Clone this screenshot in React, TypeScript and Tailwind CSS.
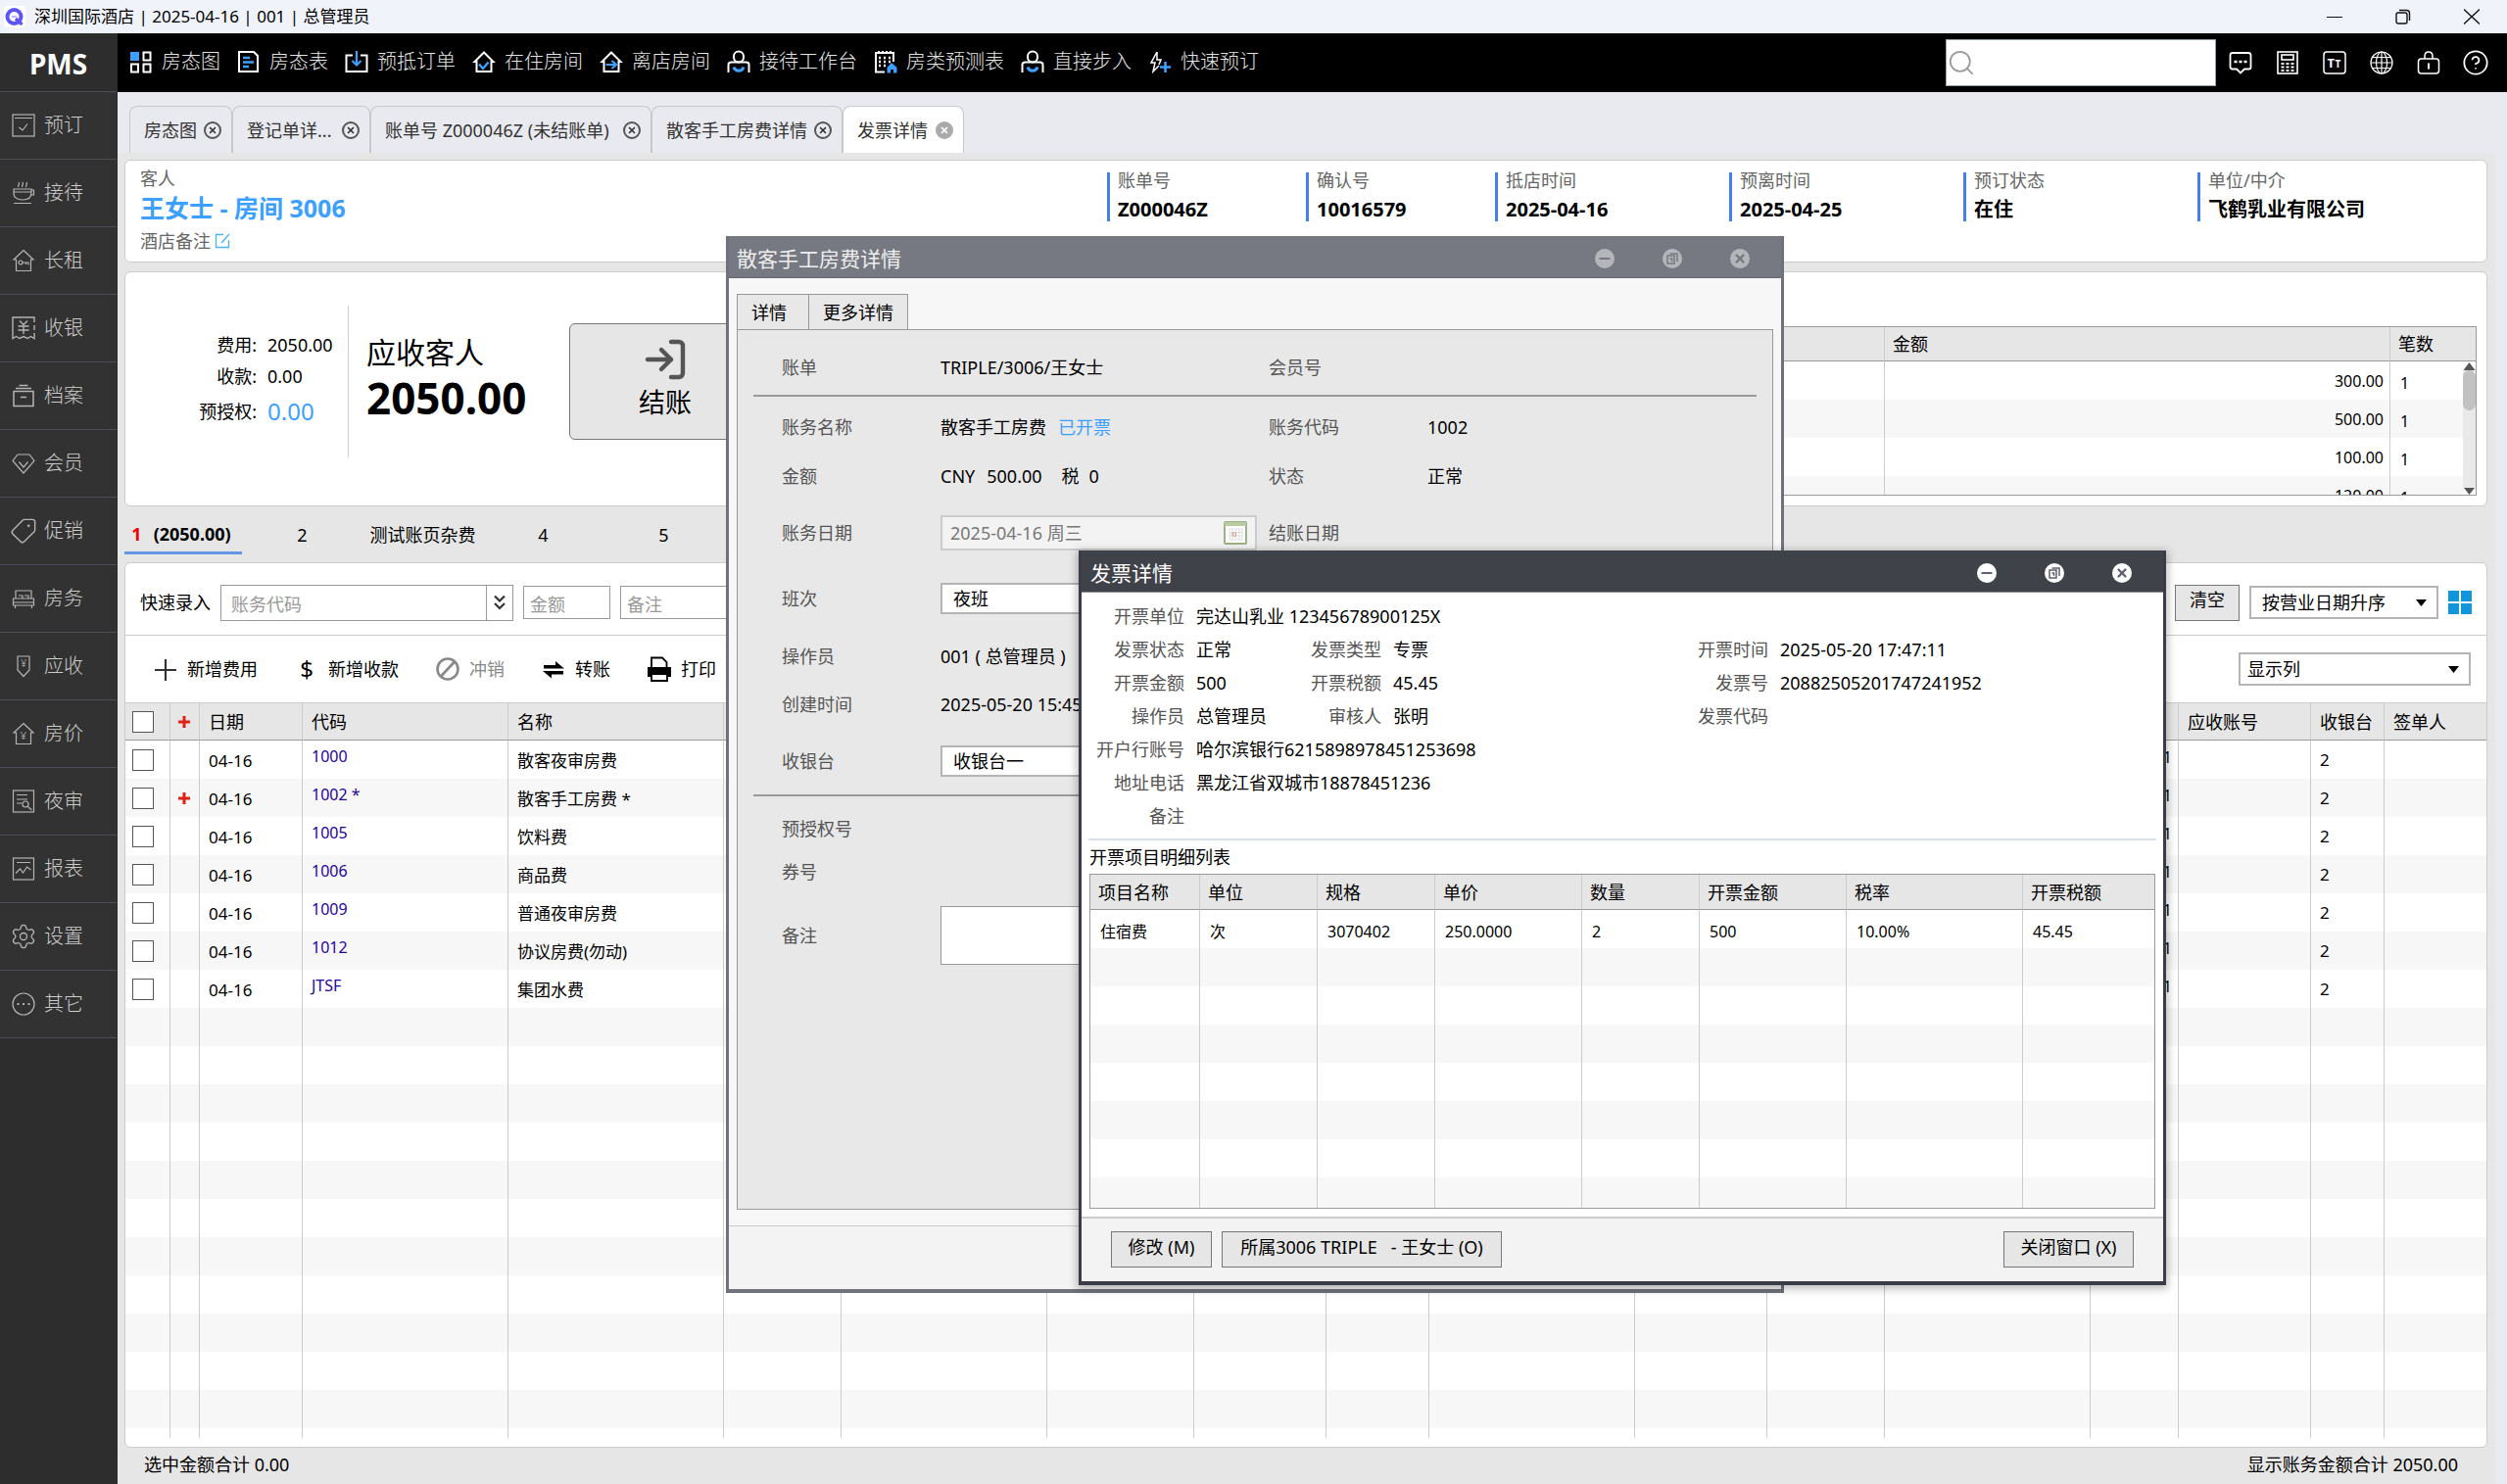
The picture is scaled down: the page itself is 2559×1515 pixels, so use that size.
import type { ReactNode } from 'react';
import { CircleHelp, LogIn, Minus, Search, Settings, Tag, X } from 'lucide-react';

/* ---------- icons ---------- */

function Glyph({ size = 24, stroke = '#b4b4b4', width = 1.2, children }: {
  size?: number;
  stroke?: string;
  width?: number;
  children: ReactNode;
}) {
  return (
    <svg
      width={size}
      height={size}
      viewBox="0 0 24 24"
      fill="none"
      stroke={stroke}
      strokeWidth={width}
      aria-hidden="true"
      className="shrink-0"
    >
      {children}
    </svg>
  );
}

function Yen({ x = 12, y = 16, size = 11 }: { x?: number; y?: number; size?: number }) {
  return (
    <text x={x} y={y} fontSize={size} textAnchor="middle" fill="#c4c4c4" stroke="none">
      ¥
    </text>
  );
}

const HOUSE = 'M12 1.5 L22 11 H19.5 V22.5 H4.5 V11 H2 Z';
const BLUE = '#3ba0ff';

const sideItems: { label: string; icon: ReactNode }[] = [
  { label: '预订', icon: <Glyph><rect x="1" y="1" width="22" height="22" /><path d="M3 4.5h18M7.5 14l3.5 3 5-6.500" /></Glyph> },
  { label: '接待', icon: <Glyph><path d="M2 8h18v4c0 5-4 7-9 7s-9-2-9-7zM2 11h18M20 9h2.500v5H19M2 22.500h18M7 6c-2-2 2-2 0-5M11 6c-2-2 2-2 0-5M15 6c-2-2 2-2 0-5" /></Glyph> },
  { label: '长租', icon: <Glyph><path d={HOUSE} /><circle cx="9" cy="14" r="2" /><path d="M11 14h6v2.500M14.500 14v2" /></Glyph> },
  { label: '收银', icon: <Glyph width={1.4}><path d="M23 6V1H1v21.500l3.500-2 3.500 2 4-2 4 2 3.500-2 3.500 2V17M23 9v5" /><path d="M8 4.500l4 4 4-4M12 8.500V18M6.500 10h11M6.500 14h11" /></Glyph> },
  { label: '档案', icon: <Glyph width={1.5}><rect x="2" y="7.500" width="20" height="15" /><path d="M4 4.500h16M7.500 1.500h9M9 13.500h6" /></Glyph> },
  { label: '会员', icon: <Glyph><path d="M6 3h12l5 6.500L12 22 1 9.500zM7.500 10.500L12 16l4.500-5.500" /></Glyph> },
  { label: '促销', icon: <Tag className="-mx-0.5 h-7 w-7 shrink-0 rotate-90 text-[#b4b4b4]" strokeWidth={1.2} aria-hidden="true" /> },
  { label: '房务', icon: <Glyph><path d="M4 12V4h16v8M1.500 12h21v4h-21zM1.500 16h21v3h-21zM3.500 19v3M20.500 19v3M7 9h4v3M13 9h4v3" /></Glyph> },
  { label: '应收', icon: <Glyph><path d="M6 2h12v14l-6 6.500L6 16z" /><Yen y={13} size={10} /></Glyph> },
  { label: '房价', icon: <Glyph><path d={HOUSE} /><Yen y={18} /></Glyph> },
  { label: '夜审', icon: <Glyph><rect x="1.500" y="1" width="21" height="22" /><path d="M5 5.500h11M5 10h11M5 14h5" /><circle cx="14" cy="15" r="3" /><path d="M16.500 17.500l4 3.500" /></Glyph> },
  { label: '报表', icon: <Glyph><rect x="1.500" y="1" width="21" height="22" /><path d="M5 5.500h14M4 16.500l4.500-4.500 3 4 4-6 4 3" /></Glyph> },
  { label: '设置', icon: <Settings className="-mx-0.5 h-7 w-7 shrink-0 text-[#b4b4b4]" strokeWidth={1.1} aria-hidden="true" /> },
  { label: '其它', icon: <Glyph><circle cx="12" cy="12" r="11" /><path d="M5.500 12h2M11 12h2M16.500 12h2" strokeWidth={2} /></Glyph> },
];

const houseNav = (
  <path d="M12 2.500L21.500 12H19.500v10H4.500V12H2.500z" />
);

const personNav = (
  <>
    <rect x="7" y="1.500" width="10" height="11" rx="5" />
    <path d="M1.500 23V15c0-2 1-2.500 3-2.500h15c2 0 3 .5 3 2.500v8" />
    <path d="M7 17.500c1.500 5 8.500 5 10 0" stroke={BLUE} strokeWidth={3} />
  </>
);

const navItems: { label: string; icon: ReactNode }[] = [
  {
    label: '房态图',
    icon: (
      <>
        <rect x="1" y="2" width="9" height="9" fill={BLUE} stroke="none" />
        <rect x="14.500" y="2.500" width="7" height="8" />
        <rect x="2" y="14.500" width="7" height="8" />
        <rect x="14.500" y="14.500" width="7" height="8" />
      </>
    ),
  },
  {
    label: '房态表',
    icon: (
      <>
        <path d="M2 2h15l4 4v16H2z" />
        <path d="M6 8h7M6 12.500h11M6 17h6" stroke={BLUE} strokeWidth={2.5} />
      </>
    ),
  },
  {
    label: '预抵订单',
    icon: (
      <>
        <path d="M8 5.500H1.500V22h21V5.500H16" />
        <path d="M12 1v13M7.500 11l4.500 4.500 4.500-4.500" stroke={BLUE} strokeWidth={2.2} />
      </>
    ),
  },
  { label: '在住房间', icon: <>{houseNav}<path d="M7 14.500l4 4.500 5.500-6.500" stroke={BLUE} strokeWidth={2.4} /></> },
  { label: '离店房间', icon: <>{houseNav}<path d="M6.500 15h10M12.500 11l4.500 4-4.500 4" stroke={BLUE} strokeWidth={2.2} /></> },
  { label: '接待工作台', icon: personNav },
  {
    label: '房类预测表',
    icon: (
      <>
        <path d="M11 22.500H2V3h18v9M5 1v3M9 1v3M13 1v3M17 1v3" />
        <path d="M5 8h2M10 8h2M15 8h2M5 12h2M10 12h2M15 12h2M5 16h2M10 16h2" strokeWidth={2.4} />
        <path d="M18 13l5.500 5v5.500h-3.500V20h-3v3.500h-3.500V18z" fill={BLUE} stroke="none" />
      </>
    ),
  },
  { label: '直接步入', icon: personNav },
  {
    label: '快速预订',
    icon: (
      <>
        <path d="M9 2L3 13h4l-2 9 6-6M9 2v8h4l-2 5" strokeWidth={1.5} />
        <path d="M12 17.500h11M17.500 12v11" stroke={BLUE} strokeWidth={2.6} />
      </>
    ),
  },
];

const topTools: { label: string; icon: ReactNode }[] = [
  { label: '消息', icon: <Glyph stroke="#fff" width={1.8}><path d="M4 2h16a2.500 2.500 0 0 1 2.500 2.500v12a2 2 0 0 1-2 2H16L12 22.500 8 18.500H3.500a2 2 0 0 1-2-2v-12A2.500 2.500 0 0 1 4 2z" /><path d="M5.500 11h3M10.500 11h3M15.500 11h3" strokeWidth={2.4} /></Glyph> },
  { label: '计算器', icon: <Glyph stroke="#fff" width={1.6}><rect x="2" y="1" width="20" height="22" /><rect x="6" y="4" width="12" height="5" /><path d="M5.500 13h3M10.500 13h3M15.500 13h3M5.500 16.500h3M10.500 16.500h3M15.500 16.500h3M5.500 20h3M10.500 20h3M15.500 20h3" strokeWidth={2} /></Glyph> },
  {
    label: '字体',
    icon: (
      <Glyph stroke="#fff" width={1.5}>
        <rect x="1" y="1" width="22" height="22" rx="3" />
        <text x="4.500" y="17" fontSize="13" fontWeight="700" fill="#fff" stroke="none">T</text>
        <text x="12.500" y="17" fontSize="10" fontWeight="700" fill="#fff" stroke="none">T</text>
      </Glyph>
    ),
  },
  {
    label: '语言',
    icon: (
      <Glyph stroke="#fff" width={1.2}>
        <circle cx="12" cy="12" r="11" />
        <ellipse cx="12" cy="12" rx="5.500" ry="11" />
        <path d="M12 1v22M1 12h22M2.500 6.500h19M2.500 17.500h19" />
      </Glyph>
    ),
  },
  { label: '锁定', icon: <Glyph stroke="#fff" width={1.5}><rect x="1.500" y="8" width="21" height="15" rx="3" /><path d="M8 8V5.500C8 3 9.500 1 12 1s4 2 4 4.500V8" /><path d="M12 12.500v6" strokeWidth={2} /></Glyph> },
  { label: '帮助', icon: <CircleHelp className="h-7 w-7 shrink-0" strokeWidth={1.5} /> },
];

/* ---------- data ---------- */

const pageTabs = [
  { label: '房态图', width: 'w-[105px]' },
  { label: '登记单详...', width: 'w-[141px]' },
  { label: '账单号 Z000046Z (未结账单)', width: 'w-[287px]' },
  { label: '散客手工房费详情', width: 'w-[195px]' },
  { label: '发票详情', width: 'w-[124px]', active: true },
];

const bookingInfo = [
  { label: '账单号', value: 'Z000046Z', width: 'w-[203px]' },
  { label: '确认号', value: '10016579', width: 'w-[193px]' },
  { label: '抵店时间', value: '2025-04-16', width: 'w-[239px]' },
  { label: '预离时间', value: '2025-04-25', width: 'w-[239px]' },
  { label: '预订状态', value: '在住', width: 'w-[239px]' },
  { label: '单位/中介', value: '飞鹤乳业有限公司', width: 'w-[295px]' },
];

const payments = ['300.00', '500.00', '100.00', '120.00'];

const charges = [
  { date: '04-16', code: '1000', name: '散客夜审房费' },
  { date: '04-16', code: '1002 *', name: '散客手工房费 *', split: true },
  { date: '04-16', code: '1005', name: '饮料费' },
  { date: '04-16', code: '1006', name: '商品费' },
  { date: '04-16', code: '1009', name: '普通夜审房费' },
  { date: '04-16', code: '1012', name: '协议房费(勿动)' },
  { date: '04-16', code: 'JTSF', name: '集团水费' },
];

const invoiceFields: [string, string][][] = [
  [['开票单位', '完达山乳业 12345678900125X']],
  [['发票状态', '正常'], ['发票类型', '专票'], ['开票时间', '2025-05-20 17:47:11']],
  [['开票金额', '500'], ['开票税额', '45.45'], ['发票号', '20882505201747241952']],
  [['操作员', '总管理员'], ['审核人', '张明'], ['发票代码', '']],
  [['开户行账号', '哈尔滨银行6215898978451253698']],
  [['地址电话', '黑龙江省双城市18878451236']],
  [['备注', '']],
];

const invoiceHeads = ['项目名称', '单位', '规格', '单价', '数量', '开票金额', '税率', '开票税额'];
const invoiceLine = ['住宿费', '次', '3070402', '250.0000', '2', '500', '10.00%', '45.45'];

/* ---------- small parts ---------- */

function RedPlus() {
  return (
    <svg width="14" height="14" viewBox="0 0 14 14" className="mx-auto block" aria-hidden="true">
      <path d="M7 1v12M1 7h12" stroke="#dd2211" strokeWidth="3" />
    </svg>
  );
}

function Dropdown({ id, label, value, className }: { id: string; label: string; value: string; className: string }) {
  return (
    <div className={`flex items-center border-2 border-[#b4b4b4] bg-white ${className}`}>
      <select id={id} aria-label={label} defaultValue={value} className="min-w-0 flex-1 appearance-none bg-transparent leading-6 outline-none">
        <option>{value}</option>
      </select>
      <svg width="11" height="7" viewBox="0 0 11 7" className="pointer-events-none mr-2.5" aria-hidden="true">
        <path d="M0 0h11L5.500 7z" fill="#000" />
      </svg>
    </div>
  );
}

function WindowButtons({ className }: { className: string }) {
  const round = 'flex h-5 w-5 items-center justify-center rounded-full';
  return (
    <div className="ml-auto flex gap-[49px] pr-8">
      <button type="button" aria-label="最小化" className={`${round} ${className}`}>
        <Minus className="h-4 w-4" strokeWidth={3} />
      </button>
      <button type="button" aria-label="还原" className={`${round} ${className}`}>
        <svg width="14" height="14" viewBox="0 0 14 14" fill="none" stroke="currentColor" strokeWidth="1.500">
          <rect x="2" y="4" width="7" height="8" />
          <path d="M4.500 2H12v8M4.500 7h2v3" />
        </svg>
      </button>
      <button type="button" aria-label="关闭" className={`${round} ${className}`}>
        <X className="h-3.5 w-3.5" strokeWidth={4} />
      </button>
    </div>
  );
}

function Field({ label, htmlFor, height, children, label2, value2 }: {
  label: string;
  htmlFor?: string;
  height: string;
  children?: ReactNode;
  label2?: string;
  value2?: string;
}) {
  return (
    <div className={`flex items-center pl-[29px] ${height}`}>
      <label htmlFor={htmlFor} className="w-[162px] shrink-0 text-[#555]">{label}</label>
      <div className="flex w-[335px] items-center">{children}</div>
      {label2 && <span className="w-[162px] text-[#555]">{label2}</span>}
      {value2 && <span>{value2}</span>}
    </div>
  );
}

/* ---------- page sections ---------- */

function TitleBar() {
  return (
    <header className="flex h-[34px] shrink-0 items-center bg-[#f0f3fa] pl-1">
      <svg width="22" height="22" viewBox="0 0 22 22" className="rounded bg-white" aria-hidden="true">
        <circle cx="10.500" cy="11" r="7" fill="none" stroke="#5b55f6" strokeWidth="4" />
        <path d="M12 13l6.500 6" stroke="#5b55f6" strokeWidth="3.500" />
        <path d="M8 11h5" stroke="#a5a1ff" strokeWidth="1.500" />
      </svg>
      <h1 className="ml-[9px] text-[17px]">深圳国际酒店 | 2025-04-16 | 001 | 总管理员</h1>
      <div className="ml-auto flex gap-[54px] pr-7">
        <button type="button" aria-label="最小化">
          <svg width="16" height="16" viewBox="0 0 16 16" stroke="#111"><path d="M0 8.500h16" /></svg>
        </button>
        <button type="button" aria-label="还原">
          <svg width="16" height="16" viewBox="0 0 16 16" fill="none" stroke="#111" strokeWidth="1.400">
            <rect x="1" y="4" width="11" height="11" rx="2" />
            <path d="M4 1.500h7.500a3 3 0 0 1 3 3V12" />
          </svg>
        </button>
        <button type="button" aria-label="关闭">
          <svg width="16" height="16" viewBox="0 0 16 16" stroke="#111" strokeWidth="1.300"><path d="M0 .5l16 15M16 .5l-16 15" /></svg>
        </button>
      </div>
    </header>
  );
}

function Sidebar() {
  return (
    <aside className="w-[120px] shrink-0 bg-[#2d2d2d] pr-px">
      <div className="flex h-[60px] items-center justify-center border-b border-[#4a4f57] pt-1 text-[28px] font-bold text-white">PMS</div>
      <nav>
        {sideItems.map((item) => (
          <button
            key={item.label}
            type="button"
            className="flex h-[69px] w-full items-center gap-[9px] border-b border-[#4a4f57] bg-[#323232] pl-3 text-xl font-light text-[#ccc]"
          >
            {item.icon}
            {item.label}
          </button>
        ))}
      </nav>
    </aside>
  );
}

function TopNav() {
  return (
    <div className="flex h-[60px] shrink-0 items-center bg-black pr-5 pl-3 text-white">
      <nav className="flex gap-[17px] pb-0.5">
        {navItems.map((item) => (
          <a key={item.label} href="#" className="flex items-center gap-[9px] text-xl font-light whitespace-nowrap text-[#e4e4e4]">
            <Glyph stroke="#fff" width={2}>{item.icon}</Glyph>
            {item.label}
          </a>
        ))}
      </nav>
      <label className="ml-auto flex h-12 w-[276px] items-center border border-gray-400 bg-white">
        <Search className="h-[30px] w-[30px] text-[#999]" strokeWidth={1.4} aria-hidden="true" />
        <input type="search" aria-label="搜索" className="min-w-0 flex-1 text-black outline-none" />
      </label>
      <div className="ml-3 flex items-center gap-[23px]">
        {topTools.map((tool) => (
          <button key={tool.label} type="button" aria-label={tool.label} className="flex w-[25px] justify-center">
            {tool.icon}
          </button>
        ))}
      </div>
    </div>
  );
}

function PageTabs() {
  return (
    <div className="flex h-[62px] shrink-0 items-end pl-3">
      {pageTabs.map((tab) => (
        <div
          key={tab.label}
          className={`flex h-12 shrink-0 items-center justify-between rounded-t-lg border border-b-0 border-[#c8c8c8] pr-2.5 pl-3.5 whitespace-nowrap text-[#333] ${tab.width} ${tab.active ? 'bg-white' : 'bg-[#e9eaef]'}`}
        >
          {tab.label}
          <button
            type="button"
            aria-label={`关闭${tab.label}`}
            className={`flex h-[18px] w-[18px] items-center justify-center rounded-full border-2 ${tab.active ? 'border-[#aaa] bg-[#aaa] text-white' : 'border-[#555] text-[#333]'}`}
          >
            <X className="h-2.5 w-2.5" strokeWidth={4} />
          </button>
        </div>
      ))}
    </div>
  );
}

function GuestPanel() {
  return (
    <section className="flex h-[105px] shrink-0 justify-between rounded-md border border-[#ccc] bg-white pl-[15px]">
      <div className="pt-1.5">
        <p className="leading-6 text-[#666]">客人</p>
        <p className="text-[25px] leading-9 font-bold text-[#3ba0ff]">王女士 - 房间 3006</p>
        <p className="flex items-center gap-1 leading-8 text-[#666]">
          酒店备注
          <svg width="16" height="16" viewBox="0 0 16 16" fill="none" stroke="#4ab4f0" strokeWidth="1.300" aria-hidden="true">
            <path d="M9 1.500H1.500v13h13V7M15 1L7 10" />
          </svg>
        </p>
      </div>
      <dl className="flex pt-3">
        {bookingInfo.map((info) => (
          <div key={info.label} className={`flex h-[50px] flex-col justify-between border-l-[3px] border-[#4381e8] pl-2 ${info.width}`}>
            <dt className="leading-4 text-[#666]">{info.label}</dt>
            <dd className="text-xl leading-6 font-bold">{info.value}</dd>
          </div>
        ))}
      </dl>
    </section>
  );
}

function BalancePanel() {
  return (
    <section className="mt-[9px] flex h-[240px] shrink-0 items-start rounded-md border border-[#ccc] bg-white">
      <dl className="grid w-[227px] grid-cols-[134px_1fr] grid-rows-[32px_32px_40px] items-center gap-x-[11px] pt-[58px]">
        <dt className="text-right">费用:</dt>
        <dd>2050.00</dd>
        <dt className="text-right">收款:</dt>
        <dd>0.00</dd>
        <dt className="text-right">预授权:</dt>
        <dd className="text-2xl text-[#3ba0ff]">0.00</dd>
      </dl>
      <div className="mt-[34px] h-[155px] w-px bg-[#ccc]" />
      <div className="w-[225px] pt-[62px] pl-[18px]">
        <p className="text-3xl leading-10">应收客人</p>
        <p className="text-[44px] leading-[52px] font-bold">2050.00</p>
      </div>
      <button type="button" className="mt-[52px] flex h-[119px] w-[196px] flex-col items-center justify-center gap-1 rounded-md border border-[#777] bg-[#e6e6e6] pb-2.5 text-[27px] leading-8">
        <LogIn className="h-12 w-12 text-[#555]" strokeWidth={2.2} aria-hidden="true" />
        结账
      </button>
      <div className="relative mt-[55px] mr-2.5 ml-6 h-[173px] flex-1 overflow-hidden border border-[#999]">
        <table className="w-full table-fixed border-separate border-spacing-0 text-left">
          <colgroup>
            <col />
            <col className="w-[516px]" />
            <col className="w-[87px]" />
          </colgroup>
          <thead>
            <tr className="h-[35px] bg-[#e6e6e6]">
              <th className="border-r border-b border-r-[#ccc] border-b-[#999]" />
              <th className="border-r border-b border-r-[#ccc] border-b-[#999] pl-2 font-normal">金额</th>
              <th className="border-b border-[#999] pl-2 font-normal">笔数</th>
            </tr>
          </thead>
          <tbody className="text-base">
            {payments.map((amount) => (
              <tr key={amount} className="h-[39px] even:bg-[#f7f7f7]">
                <td className="border-r border-[#ccc]" />
                <td className="border-r border-[#ccc] pr-1.5 text-right">{amount}</td>
                <td className="pt-1 pl-2.5">1</td>
              </tr>
            ))}
          </tbody>
        </table>
        <div className="absolute top-[35px] right-0 bottom-0 flex w-[13px] flex-col bg-[#e9e9e9]" aria-hidden="true">
          <svg width="13" height="9" viewBox="0 0 13 9" className="bg-white"><path d="M6.500 1L12.500 9H.5z" fill="#555" /></svg>
          <div className="h-[41px] rounded-full bg-[#c2c2c2]" />
          <svg width="13" height="7" viewBox="0 0 13 7" className="mt-auto bg-white"><path d="M1 0h11L6.500 7z" fill="#555" /></svg>
        </div>
      </div>
    </section>
  );
}

function FolioTabs() {
  const tab = 'h-[49px] w-[123px] pt-1 text-center';
  return (
    <div className="flex h-[57px] shrink-0 items-start">
      <button type="button" className="h-[49px] w-[120px] border-b-[3px] border-[#6496e6] pt-2.5 pr-1 font-bold">
        <span className="mr-3 text-[#f00000]">1</span>
        (2050.00)
      </button>
      <button type="button" className={`${tab} pt-2`}>2</button>
      <button type="button" className={`${tab} pt-2`}>测试账页杂费</button>
      <button type="button" className={`${tab} pt-2`}>4</button>
      <button type="button" className={`${tab} pt-2`}>5</button>
    </div>
  );
}

function ToolButton({ label, icon, muted }: { label: string; icon: ReactNode; muted?: boolean }) {
  return (
    <button type="button" className={`flex items-center gap-2.5 ${muted ? 'text-[#888]' : ''}`}>
      {icon}
      {label}
    </button>
  );
}

function ChargesPanel() {
  const box = 'border border-[#999] bg-white placeholder:text-[#999] outline-none';
  const blankRows = Array.from({ length: 12 }, (_, i) => i);
  const hidden = Array.from({ length: 9 }, (_, i) => i);
  const head = 'border-r border-b border-r-[#ccc] border-b-[#999] pl-[9px] font-normal';
  const cell = 'border-r border-[#ccc] pl-[9px]';

  return (
    <section className="flex min-h-0 flex-1 flex-col overflow-hidden rounded-md border border-[#ccc] bg-white pb-[9px]">
      {/* Quick entry */}
      <div className="flex h-[74px] shrink-0 items-center gap-2.5 border-b border-[#ccc] px-[15px] pt-[7px]">
        <label htmlFor="quick-code">快速录入</label>
        <div className="flex h-[37px] w-[299px] border border-[#999]">
          <input id="quick-code" placeholder="账务代码" className="min-w-0 flex-1 pt-1 pl-2.5 outline-none placeholder:text-[#999]" />
          <button type="button" aria-label="展开账务代码" className="flex w-[27px] items-center justify-center border-l border-[#999]">
            <svg width="12" height="16" viewBox="0 0 12 16" fill="none" stroke="#333" strokeWidth="2.200">
              <path d="M1 1.500l5 5 5-5M1 9l5 5 5-5" />
            </svg>
          </button>
        </div>
        <input aria-label="金额" placeholder="金额" className={`${box} h-[34px] w-[89px] pt-1 pl-1.5`} />
        <input aria-label="备注" placeholder="备注" className={`${box} h-[34px] w-[260px] pt-1 pl-1.5`} />
        <button type="button" className="ml-auto h-[37px] w-[66px] border border-[#777] bg-[#e6e6e6] pb-1.5">清空</button>
        <Dropdown id="sort" label="排序" value="按营业日期升序" className="h-[34px] w-[193px] pl-[11px]" />
        <button type="button" aria-label="平铺视图" className="grid h-6 w-6 grid-cols-2 gap-0.5">
          <span className="h-[11px] bg-[#1296db]" />
          <span className="h-[11px] bg-[#1296db]" />
          <span className="h-[11px] bg-[#1296db]" />
          <span className="h-[11px] bg-[#1296db]" />
        </button>
      </div>

      {/* Toolbar */}
      <div className="flex h-[69px] shrink-0 items-center gap-[38px] border-b border-[#ccc] pr-4 pl-[29px]">
        <ToolButton label="新增费用" icon={<Glyph stroke="#333" width={2.2}><path d="M12 2v22M1 13h22" /></Glyph>} />
        <ToolButton label="新增收款" icon={<span className="w-6 text-center text-2xl leading-6">$</span>} />
        <ToolButton
          label="冲销"
          muted
          icon={<Glyph stroke="#888" width={2.6}><circle cx="12" cy="12" r="10.500" /><path d="M5 19.500L19 4.500" /></Glyph>}
        />
        <ToolButton
          label="转账"
          icon={
            <svg width="24" height="24" viewBox="0 0 24 24" aria-hidden="true">
              <path d="M2 8h12V4l9 7.500H2zM22 14H1l9 7.500v-4h12z" />
            </svg>
          }
        />
        <ToolButton
          label="打印"
          icon={
            <svg width="24" height="26" viewBox="0 0 24 26" aria-hidden="true">
              <path d="M4 11V1.500h11l4.500 4.500v5" fill="#fff" stroke="#000" strokeWidth="1.800" />
              <path d="M0 11h24v10H0z" />
              <path d="M4 18h16v7H4z" fill="#fff" stroke="#000" strokeWidth="1.800" />
            </svg>
          }
        />
        <Dropdown id="columns" label="显示列" value="显示列" className="ml-auto h-[34px] w-[237px] pl-[7px]" />
      </div>

      {/* Charges */}
      <div className="min-h-0 flex-1 overflow-hidden">
        <table className="w-full table-fixed border-separate border-spacing-0 text-left">
          <colgroup>
            <col className="w-[46px]" />
            <col className="w-[30px]" />
            <col className="w-[105px]" />
            <col className="w-[210px]" />
            <col className="w-[220px]" />
            <col className="w-[120px]" />
            <col className="w-[210px]" />
            <col className="w-[150px]" />
            <col className="w-[135px]" />
            <col className="w-[105px]" />
            <col className="w-[210px]" />
            <col className="w-[135px]" />
            <col className="w-[120px]" />
            <col className="w-[210px]" />
            <col className="w-[90px]" />
            <col className="w-[135px]" />
            <col className="w-[75px]" />
            <col />
          </colgroup>
          <thead>
            <tr className="h-[38px] bg-[#e6e6e6]">
              <th className={`${head} !pl-[7px]`}>
                <input type="checkbox" aria-label="全选" className="block h-[22px] w-[22px] appearance-none border border-[#555] bg-white" />
              </th>
              <th className="border-r border-b border-r-[#ccc] border-b-[#999] pr-0.5"><RedPlus /></th>
              <th className={head}>日期</th>
              <th className={head}>代码</th>
              <th className={head}>名称</th>
              {hidden.map((i) => <th key={i} className={head} />)}
              <th className={head} />
              <th className={head}>应收账号</th>
              <th className={head}>收银台</th>
              <th className="border-b border-[#999] pl-[9px] font-normal">签单人</th>
            </tr>
          </thead>
          <tbody>
            {charges.map((row) => (
              <tr key={row.code} className="h-[39px] even:bg-[#f7f7f7]">
                <td className={`${cell} !pl-[7px]`}>
                  <input type="checkbox" aria-label={`选择 ${row.name}`} className="block h-[22px] w-[22px] appearance-none border border-[#555] bg-white" />
                </td>
                <td className="border-r border-[#ccc] pr-0.5">{row.split && <RedPlus />}</td>
                <td className={`${cell} pt-1 text-[17px]`}>{row.date}</td>
                <td className={`${cell} pb-2 text-base`}>
                  <a href="#" className="text-[#26039c]">{row.code}</a>
                </td>
                <td className={`${cell} pt-1 text-[17px]`}>{row.name}</td>
                {hidden.map((i) => <td key={i} className={cell} />)}
                <td className={`${cell} pr-1.5 pb-1.5 text-right text-base`}>1</td>
                <td className={cell} />
                <td className={`${cell} pt-0.5 text-[17px]`}>2</td>
                <td />
              </tr>
            ))}
            {blankRows.map((i) => (
              <tr key={i} className="h-[39px] even:bg-[#f7f7f7]">
                {Array.from({ length: 17 }, (_, c) => <td key={c} className="border-r border-[#ccc]" />)}
                <td />
              </tr>
            ))}
          </tbody>
        </table>
      </div>
    </section>
  );
}

/* ---------- floating windows ---------- */

function ChargeWindow() {
  return (
    <section
      aria-label="散客手工房费详情"
      className="absolute top-[241px] left-[741px] flex h-[1079px] w-[1080px] flex-col border-x-[3px] border-b-4 border-[#6f727c] bg-[#f7f7f7]"
    >
      <div className="flex h-[43px] shrink-0 items-center border-b border-[#666972] bg-[#767982] pt-1 pl-2">
        <h2 className="text-[21px] leading-8 text-[#eee]">散客手工房费详情</h2>
        <WindowButtons className="bg-[#b4b6ba] text-[#767982]" />
      </div>
      <div className="flex shrink-0 pt-4 pl-2">
        <button type="button" className="h-9 w-[73px] border border-r-0 border-b-0 border-[#999] bg-[#e8e8e8] pl-3.5 text-left">详情</button>
        <button type="button" className="h-9 w-[102px] border border-b-0 border-[#999] bg-[#e8e8e8]">更多详情</button>
      </div>
      <div className="mx-2 flex-1 border border-[#999] bg-[#e8e8e8] px-4">
        <div className="border-b-2 border-[#999] pt-2.5">
          <Field label="账单" height="h-14" label2="会员号">TRIPLE/3006/王女士</Field>
        </div>
        <div className="border-b-2 border-[#999] pt-1.5">
          <Field label="账务名称" height="h-[50px]" label2="账务代码" value2="1002">
            散客手工房费
            <a href="#" className="ml-3 text-[#3ba0ff]">已开票</a>
          </Field>
          <Field label="金额" height="h-[50px]" label2="状态" value2="正常">
            <span>CNY</span>
            <span className="ml-3">500.00</span>
            <span className="ml-5">税</span>
            <span className="ml-2.5">0</span>
          </Field>
          <Field label="账务日期" htmlFor="charge-date" height="h-[66px]" label2="结账日期">
            <div className="flex h-9 w-[323px] items-center border-2 border-[#ccc] bg-[#f3f3f3] px-2">
              <input id="charge-date" disabled defaultValue="2025-04-16 周三" className="min-w-0 flex-1 text-[#777]" />
              <svg width="24" height="24" viewBox="0 0 24 24" aria-hidden="true">
                <rect x="1" y="1" width="22" height="22" rx="1" fill="#fff" stroke="#9db184" strokeWidth="2" />
                <path d="M1 1h22v4H1z" fill="#b9cca0" />
                <path d="M6 8h13v11H6zM6 11.500h13M6 15h13M9 8v11M12.500 8v11M16 8v11" fill="none" stroke="#ddd" />
                <path d="M9 12h3.500v3H9z" fill="none" stroke="#dc9a86" />
              </svg>
            </div>
          </Field>
          <Field label="班次" htmlFor="shift" height="h-[68px]">
            <Dropdown id="shift" label="班次" value="夜班" className="h-8 w-[320px] pl-[11px]" />
          </Field>
          <Field label="操作员" height="h-[50px]">001 ( 总管理员 )</Field>
          <Field label="创建时间" height="h-12">2025-05-20 15:45:32</Field>
          <Field label="收银台" htmlFor="cashier" height="h-[68px]">
            <Dropdown id="cashier" label="收银台" value="收银台一" className="h-8 w-[320px] pl-[11px]" />
          </Field>
        </div>
        <div className="pt-[11px]">
          <Field label="预授权号" height="h-11" />
          <Field label="券号" height="h-11" />
          <Field label="备注" htmlFor="charge-note" height="h-[85px]">
            <textarea id="charge-note" className="block h-[60px] w-[323px] resize-none border border-[#999] bg-white" />
          </Field>
        </div>
      </div>
      <div className="mt-4 h-[65px] shrink-0 border-t border-[#ccc] bg-[#f3f3f3]" />
    </section>
  );
}

function InvoiceWindow() {
  const valueWidths = ['w-[84px]', 'w-[278px]', ''];
  const button = 'h-[37px] border border-[#777] bg-[#e6e6e6] pb-1.5';

  return (
    <section
      aria-label="发票详情"
      className="absolute top-[562px] left-[1101px] flex h-[750px] w-[1110px] flex-col border-x-[3px] border-b-4 border-[#3a3d47] bg-white shadow-[0_2px_8px_2px_rgba(0,0,0,0.25)]"
    >
      <div className="flex h-[43px] shrink-0 items-center border-b border-[#8a8c91] bg-[#3f4249] pt-1 pl-[9px]">
        <h2 className="text-[21px] leading-8 text-white">发票详情</h2>
        <WindowButtons className="bg-white text-[#5d6072]" />
      </div>

      <dl className="mx-[7px] shrink-0 border-b-2 border-[#d9dfe6] pt-[7px] pb-1.5">
        {invoiceFields.map((row) => (
          <div key={row[0][0]} className="flex h-[34px] items-center">
            {row.map(([label, value], i) => (
              <div key={label} className="flex gap-3 whitespace-nowrap">
                <dt className={`shrink-0 text-right text-[#555] ${i === 0 ? 'w-[98px]' : 'w-[105px]'}`}>{label}</dt>
                <dd className={row.length > 1 ? valueWidths[i] : ''}>{value}</dd>
              </div>
            ))}
          </div>
        ))}
      </dl>

      <h3 className="mx-2 shrink-0 leading-[34px]">开票项目明细列表</h3>
      <div className="mx-2 min-h-0 flex-1 overflow-hidden border border-[#999] pb-0.5">
        <table className="w-full table-fixed border-separate border-spacing-0 text-left">
          <colgroup>
            <col className="w-[112px]" />
            <col className="w-[120px]" />
            <col className="w-[120px]" />
            <col className="w-[150px]" />
            <col className="w-[120px]" />
            <col className="w-[150px]" />
            <col className="w-[180px]" />
            <col />
          </colgroup>
          <thead>
            <tr className="h-9 bg-[#e6e6e6]">
              {invoiceHeads.map((name) => (
                <th key={name} className="border-r border-b border-r-[#ccc] border-b-[#999] pl-2 font-normal last:border-r-0">{name}</th>
              ))}
            </tr>
          </thead>
          <tbody>
            <tr className="h-[39px] text-base">
              {invoiceLine.map((value, i) => (
                <td key={i} className="border-r border-[#ccc] pt-1 pl-2.5 last:border-r-0">{value}</td>
              ))}
            </tr>
            {Array.from({ length: 7 }, (_, r) => (
              <tr key={r} className="h-[39px] even:bg-[#f7f7f7]">
                {invoiceHeads.map((name) => <td key={name} className="border-r border-[#ccc] last:border-r-0" />)}
              </tr>
            ))}
          </tbody>
        </table>
      </div>

      <div className="mt-2 flex h-[66px] shrink-0 items-start gap-2.5 border-t-2 border-[#ccc] bg-[#f3f3f3] px-[30px] pt-[13px]">
        <button type="button" className={`${button} w-[103px]`}>修改 (M)</button>
        <button type="button" className={`${button} w-[286px] whitespace-pre`}>所属3006 TRIPLE   - 王女士 (O)</button>
        <button type="button" className={`${button} ml-auto w-[133px]`}>关闭窗口 (X)</button>
      </div>
    </section>
  );
}

export default function App() {
  return (
    <div className="relative flex h-screen flex-col overflow-hidden bg-[#e9eaef] font-['Noto_Sans','Noto_Sans_CJK_SC',sans-serif] text-lg text-black">
      <TitleBar />
      <div className="flex min-h-0 flex-1">
        <Sidebar />
        <main className="flex min-w-0 flex-1 flex-col">
          <TopNav />
          <PageTabs />
          <div className="mr-3 flex min-h-0 flex-1 flex-col bg-[#e6e6e6] pt-[7px] pr-2 pl-[7px]">
            <GuestPanel />
            <BalancePanel />
            <FolioTabs />
            <ChargesPanel />
            <footer className="flex h-[37px] shrink-0 items-center justify-between pr-[30px] pb-1 pl-5">
              <span>选中金额合计 0.00</span>
              <span>显示账务金额合计 2050.00</span>
            </footer>
          </div>
        </main>
      </div>
      <ChargeWindow />
      <InvoiceWindow />
    </div>
  );
}
